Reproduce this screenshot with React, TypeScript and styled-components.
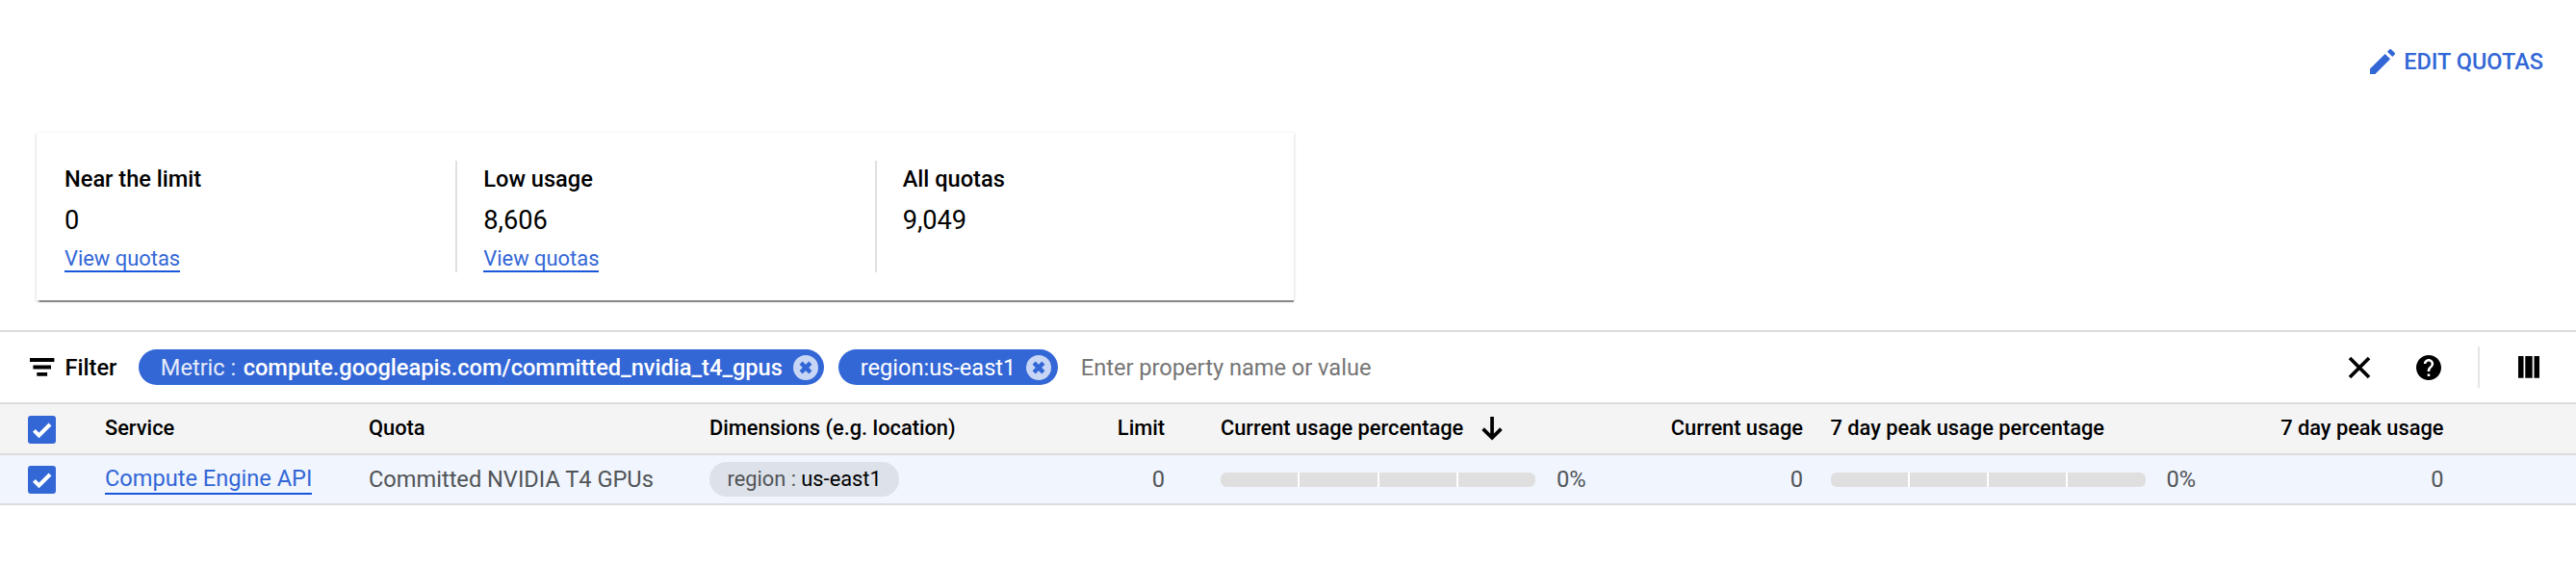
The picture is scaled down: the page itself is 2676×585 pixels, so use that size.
import React from "react";
import styled, { createGlobalStyle } from "styled-components";

const BLUE = "#3367d6";
const LINE = "#dcdcdc";

const GlobalStyle = createGlobalStyle`
  * { box-sizing: border-box; }
  body {
    margin: 0;
    background: #fff;
    color: #000;
    font-family: Roboto, "Liberation Sans", sans-serif;
    font-size: 23.6px;
    overflow: hidden;
  }
  svg { display: block; flex: none; }
`;

const Page = styled.main`
  width: 100%;
  min-height: 585px;
`;

const ActionBar = styled.header`
  display: flex;
  justify-content: flex-end;
  height: 138px;
  padding: 48px 34px 0 0;
`;

const EditButton = styled.button`
  display: flex;
  align-items: center;
  gap: 9.5px;
  height: 31px;
  padding: 0;
  border: 0;
  background: none;
  color: ${BLUE};
  font: 500 23.5px Roboto, sans-serif;
`;

const SummaryCard = styled.section`
  display: grid;
  grid-template-columns: repeat(3, 1fr);
  width: 1306px;
  height: 174px;
  margin: 0 0 31px 38px;
  padding: 29px 0;
  box-shadow: 0 2px 1px -0.5px rgba(0, 0, 0, 0.4), 0 1px 3px rgba(0, 0, 0, 0.22);
`;

const Stat = styled.div`
  height: 116px;
  margin-right: -2px;
  padding-left: 29px;
  border-right: 2px solid #e0e0e0;
  &:last-child { border-right: 0; }
`;

const StatTitle = styled.div`
  font-weight: 500;
  line-height: 38px;
`;

const StatValue = styled.div`
  margin-top: 2px;
  font-size: 27.2px;
  line-height: 44px;
`;

const StatLink = styled.div`
  font-size: 21.9px;
  line-height: 36px;
`;

const Link = styled.a`
  color: ${BLUE};
  border-bottom: 2px solid #1a56db;
  text-decoration: none;
`;

const FilterBar = styled.div`
  display: flex;
  align-items: center;
  height: 75px;
  padding: 0 38px 0 31px;
  border-top: 2px solid ${LINE};
`;

const FilterLabel = styled.div`
  display: flex;
  align-items: center;
  gap: 10.5px;
  width: 113px;
  font-weight: 500;
`;

const FilterChip = styled.div`
  display: flex;
  align-items: center;
  height: 37px;
  margin-right: 14.5px;
  padding: 0 6.5px 0 22.8px;
  border-radius: 19px;
  background: ${BLUE};
  color: #fff;
  white-space: pre;
  b { font-weight: 500; }
  svg { margin-left: 11px; }
`;

const ChipKey = styled.span`
  margin-right: 1.5px;
  color: #e6ecfa;
`;

const FilterInput = styled.input`
  flex: 1;
  margin-left: 9.5px;
  padding: 0;
  border: 0;
  outline: 0;
  font: 23.6px Roboto, sans-serif;
  &::placeholder { color: #757575; opacity: 1; }
`;

const Tools = styled.div`
  display: flex;
  align-items: center;
`;

const ToolDivider = styled.span`
  width: 2px;
  height: 43px;
  margin: 0 40px 0 38px;
  background: #e6e6e6;
`;

const TableRow = styled.div<{ $head?: boolean }>`
  display: grid;
  grid-template-columns: 80px 274px 354px 353px 120px 463px 200px 427px 238.5px;
  align-items: center;
  height: ${(p) => (p.$head ? "55px" : "52px")};
  padding-left: 29px;
  border-top: ${(p) => (p.$head ? `2px solid ${LINE}` : "0")};
  border-bottom: 2px solid ${LINE};
  background: ${(p) => (p.$head ? "#f4f4f4" : "#f0f5fe")};
  color: ${(p) => (p.$head ? "#000" : "#515457")};
  font-size: ${(p) => (p.$head ? "21.8px" : "23.6px")};
  font-weight: ${(p) => (p.$head ? 500 : 400)};
  line-height: 30px;
`;

const Cell = styled.div<{ $indent?: number; $right?: boolean; $raise?: boolean }>`
  display: flex;
  align-items: center;
  justify-content: ${(p) => (p.$right ? "flex-end" : "flex-start")};
  padding-left: ${(p) => p.$indent ?? 0}px;
  padding-bottom: ${(p) => (p.$raise ? 1 : 0)}px;
  white-space: pre;
`;

const CheckBox = styled.span<{ $low?: boolean }>`
  display: block;
  width: 29px;
  height: 29px;
  margin-top: ${(p) => (p.$low ? 2 : 0)}px;
  border-radius: 3px;
  background: ${BLUE};
`;

const DimensionChip = styled.span`
  display: flex;
  align-items: center;
  height: 36px;
  padding: 0 18.5px 0 18.5px;
  border-radius: 18px;
  background: #dde1e9;
  font-size: 21.8px;
  white-space: pre;
  b { color: #000; font-weight: 400; }
`;

const Meter = styled.span`
  display: flex;
  flex: none;
  gap: 2px;
  width: 327px;
  height: 15px;
  margin-right: 22px;
  border-radius: 6px;
  background: #fff;
  overflow: hidden;
`;

const MeterSegment = styled.i`
  flex: 1;
  background: #dfdfdf;
`;

const SortIcon = styled.svg`
  margin: 0 0 0 18.5px;
`;

const PencilIcon = () => (
  <svg width="26" height="26" viewBox="3 3 18 18" fill="currentColor">
    <path d="M3 17.25V21h3.75L17.6 10.15l-3.75-3.75L3 17.25zM20.71 7.04a1 1 0 0 0 0-1.41l-2.34-2.34a1 1 0 0 0-1.41 0l-1.55 1.55 3.75 3.75 1.55-1.55z" />
  </svg>
);

const FilterIcon = () => (
  <svg width="26" height="19" viewBox="0 0 26 19">
    <path d="M0 0h25.4v4H0zM3.4 7.6H22v3.8H3.4zM7.3 15h10.8v3.8H7.3z" />
  </svg>
);

const RemoveIcon = () => (
  <svg width="26" height="26" viewBox="0 0 26 26">
    <circle cx="13" cy="13" r="13" fill="#c8d6f5" />
    <path d="M8.1 8.1l9.8 9.8M17.9 8.1l-9.8 9.8" stroke={BLUE} strokeWidth="4.4" />
  </svg>
);

const CloseIcon = () => (
  <svg width="24" height="24" viewBox="0 0 24 24">
    <path d="M2 2l20 20M22 2L2 22" stroke="#000" strokeWidth="3.7" />
  </svg>
);

const HelpIcon = styled.svg`
  margin-left: 47.5px;
`;

const ColumnsIcon = () => (
  <svg width="22" height="23" viewBox="0 0 22 23">
    <path d="M0 0h5.5v22.7H0zM7.3 0h7.4v22.7H7.3zM16.5 0H22v22.7h-5.5z" />
  </svg>
);

const Check = ({ low }: { low?: boolean }) => (
  <CheckBox $low={low}>
    <svg width="29" height="29" viewBox="0 0 29 29">
      <path d="M6.4 15.4l5.1 5.1L23 9" fill="none" stroke="#fff" strokeWidth="4" />
    </svg>
  </CheckBox>
);

const UsageMeter = () => (
  <>
    <Meter>
      {[0, 1, 2, 3].map((i) => (
        <MeterSegment key={i} />
      ))}
    </Meter>
    0%
  </>
);

const stats = [
  { title: "Near the limit", value: "0", link: true },
  { title: "Low usage", value: "8,606", link: true },
  { title: "All quotas", value: "9,049", link: false },
];

export default function App() {
  return (
    <Page>
      <GlobalStyle />
      <ActionBar>
        <EditButton>
          <PencilIcon />
          EDIT QUOTAS
        </EditButton>
      </ActionBar>

      <SummaryCard>
        {stats.map((s) => (
          <Stat key={s.title}>
            <StatTitle>{s.title}</StatTitle>
            <StatValue>{s.value}</StatValue>
            {s.link && (
              <StatLink>
                <Link>View quotas</Link>
              </StatLink>
            )}
          </Stat>
        ))}
      </SummaryCard>

      <FilterBar>
        <FilterLabel>
          <FilterIcon />
          Filter
        </FilterLabel>
        <FilterChip>
          <ChipKey>Metric : </ChipKey>
          <b>compute.googleapis.com/committed_nvidia_t4_gpus</b>
          <RemoveIcon />
        </FilterChip>
        <FilterChip>
          region:us-east1
          <RemoveIcon />
        </FilterChip>
        <FilterInput placeholder="Enter property name or value" />
        <Tools>
          <CloseIcon />
          <HelpIcon width="26" height="26" viewBox="2 2 20 20">
            <path d="M12 2C6.48 2 2 6.48 2 12s4.48 10 10 10 10-4.48 10-10S17.52 2 12 2zm1 17h-2v-2h2v2zm2.07-7.75l-.9.92C13.45 12.9 13 13.5 13 15h-2v-.5c0-1.1.45-2.1 1.17-2.83l1.24-1.26c.37-.36.59-.86.59-1.41 0-1.1-.9-2-2-2s-2 .9-2 2H8c0-2.21 1.79-4 4-4s4 1.79 4 4c0 .88-.36 1.68-.93 2.25z" />
          </HelpIcon>
          <ToolDivider />
          <ColumnsIcon />
        </Tools>
      </FilterBar>

      <TableRow $head>
        <Check low />
        <Cell $raise>Service</Cell>
        <Cell $raise>Quota</Cell>
        <Cell $raise>Dimensions (e.g. location)</Cell>
        <Cell $raise $right>Limit</Cell>
        <Cell $raise $indent={58}>
          Current usage percentage
          <SortIcon width="22" height="25" viewBox="0 0 22 25">
            <path d="M11 0v22M1.6 12.6l9.4 9.4 9.4-9.4" fill="none" stroke="#000" strokeWidth="3.7" />
          </SortIcon>
        </Cell>
        <Cell $raise $right>Current usage</Cell>
        <Cell $raise $indent={28.5}>7 day peak usage percentage</Cell>
        <Cell $raise $right>7 day peak usage</Cell>
      </TableRow>

      <TableRow>
        <Check />
        <Cell>
          <Link>Compute Engine API</Link>
        </Cell>
        <Cell>Committed NVIDIA T4 GPUs</Cell>
        <Cell>
          <DimensionChip>
            region : <b>us-east1</b>
          </DimensionChip>
        </Cell>
        <Cell $right>0</Cell>
        <Cell $indent={58}>
          <UsageMeter />
        </Cell>
        <Cell $right>0</Cell>
        <Cell $indent={28.5}>
          <UsageMeter />
        </Cell>
        <Cell $right>0</Cell>
      </TableRow>
    </Page>
  );
}
